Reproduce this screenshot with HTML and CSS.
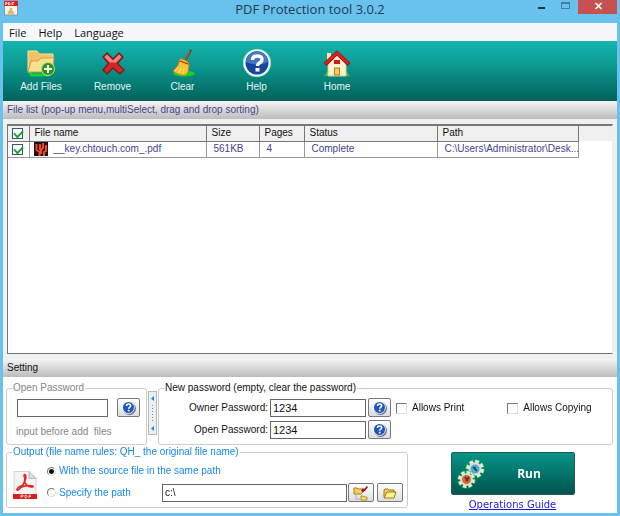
FILE: index.html
```html
<!DOCTYPE html>
<html lang="en">
<head>
<meta charset="utf-8">
<title>PDF Protection tool 3.0.2</title>
<link rel="stylesheet" href="styles.css">
</head>
<body>
<svg class="defs" aria-hidden="true">
  <symbol id="help" viewBox="0 0 28 28">
    <circle cx="14" cy="14" r="14" fill="#a5f5c0"/>
    <circle cx="14" cy="14" r="13" fill="#fff"/>
    <circle cx="14" cy="14" r="11.500" fill="#17479b"/>
    <path d="M3 13a11 11 0 0 1 22 0q-11 5-22 0z" fill="#4677be"/>
    <path d="M9.500 11q0-4 4.700-4t4.800 3.600q0 2-2.700 3.400-1.800 1-1.800 3" fill="none" stroke="#fff" stroke-width="3.400"/>
    <rect x="12.500" y="19" width="4" height="3.500" fill="#fff"/>
  </symbol>
  <symbol id="smallhelp" viewBox="0 0 14 14">
    <circle cx="7.500" cy="7.500" r="6.500" fill="#66748e"/>
    <circle cx="6.500" cy="6.500" r="6.300" fill="#f4f8ff"/>
    <circle cx="6.500" cy="6.500" r="5.500" fill="#1f55bd"/>
    <path d="M4.500 5q0-2 2.100-2t2.100 1.800q0 1-1.200 1.600-.8.500-.8 1.400" fill="none" stroke="#fff" stroke-width="1.600"/>
    <rect x="5.800" y="8.800" width="1.800" height="1.600" fill="#fff"/>
  </symbol>
  <symbol id="gear" viewBox="-9 -9 18 18">
    <circle r="6.700" fill="none" stroke="#22c838" stroke-width="4" stroke-dasharray="3.700 1.560"/>
    <circle r="6.400" fill="none" stroke="#e8eae5" stroke-width="3.200" stroke-dasharray="3.100 1.927"/>
    <circle r="6" fill="#dadfda"/>
  </symbol>
</svg>
<div class="window">
  <header class="titlebar">
    <svg class="appicon" viewBox="0 0 16 16" aria-hidden="true">
      <rect x="1.500" y="1" width="13" height="14" fill="#f8f3e4" stroke="#8b98a2" stroke-width="1"/>
      <rect x="1" y="1" width="14" height="5" fill="#e51f20"/>
      <path d="M2.500 5V2.500h1.500V4H2.500M5.500 2.500V5h1l.8-1.200-.8-1.300zM9 5V2.500h2M9 4h1.500" fill="none" stroke="#fff" stroke-width=".8"/>
      <path d="M5 14q-1-3 1-3l1-3h2l.5 3q2 0 1.500 3z" fill="#d9bd73"/>
    </svg>
    <h1>PDF Protection tool 3.0.2</h1>
    <div class="controls">
      <button type="button" aria-label="Minimize"><svg viewBox="0 0 24 14"><rect x="8" y="7" width="7" height="2" fill="#16344a"/></svg></button>
      <button type="button" aria-label="Maximize"><svg viewBox="0 0 24 14"><rect x="7.500" y="2.500" width="8" height="6" fill="none" stroke="#4b7c99"/><path d="M7 3h9" stroke="#4b7c99" stroke-width="2"/></svg></button>
      <button type="button" class="close" aria-label="Close"><svg viewBox="0 0 39 14"><path d="M17.500 3l6 6m0-6l-6 6" stroke="#fff" stroke-width="1.700"/></svg></button>
    </div>
  </header>
  <nav class="menu">
    <button type="button">File</button><button type="button">Help</button><button type="button">Language</button>
  </nav>
  <div class="toolbar">
    <button type="button">
      <svg viewBox="0 0 28 28" aria-hidden="true">
        <path d="M1 22l4 4h16l5-6" fill="none" stroke="#18d52e" stroke-width="3"/>
        <path d="M1 22V2h9l2 3h14v16z" fill="#efc264" stroke="#fbe29a"/>
        <path d="M1 23l3-11h7l3-3h13l-2 14z" fill="#fadf92" stroke="#d49a45"/>
        <circle cx="21" cy="20" r="6.500" fill="#2f951f" stroke="#b7e875"/>
        <path d="M21 16v8m-4-4h8" stroke="#fff" stroke-width="2"/>
      </svg>
      <span>Add Files</span>
    </button>
    <button type="button">
      <svg viewBox="0 0 28 28" aria-hidden="true">
        <path d="M4 8l4-4 6 6 6-6 4 4-5.500 6.500L25 21l-4 4-7-6-6 6-4-4 5.500-6.500z" fill="#d92525" stroke="#68231c" stroke-width="1.300"/>
        <path d="M5.500 8L8 5.500l6 6 6-6L22.500 8 17 13.500h-6z" fill="#ef8580"/>
      </svg>
      <span>Remove</span>
    </button>
    <button type="button">
      <svg viewBox="0 0 28 28" aria-hidden="true">
        <ellipse cx="15" cy="24.500" rx="11" ry="3" fill="#10d526"/>
        <path d="M15.500 13L22 1" stroke="#78301d" stroke-width="2"/>
        <path d="M16 12l5-10" stroke="#e05b29" stroke-width="1"/>
        <path d="M11 10q2-1 8 3l1 4q0 6-3 9-8 1-13-4 6-5 7-12z" fill="#f5c334" stroke="#b9851f"/>
        <path d="M11 12l8 3" stroke="#a52d1c" stroke-width="1.200"/>
        <path d="M9 18l-3 4m6-3l-2 5m5-4l-1 5" stroke="#ffe77a"/>
      </svg>
      <span>Clear</span>
    </button>
    <button type="button">
      <svg aria-hidden="true"><use href="#help"/></svg>
      <span>Help</span>
    </button>
    <button type="button">
      <svg viewBox="0 0 28 28" aria-hidden="true">
        <path d="M1 27l4-5h18l4 5z" fill="#57b92f"/>
        <path d="M4 4h4v9H4z" fill="#f4e7b5"/>
        <path d="M5 15l9-9 9 9v12H5z" fill="#fff4d0" stroke="#d9c58e"/>
        <path d="M2 15.500L14 4l12 11.500" fill="none" stroke="#7e1611" stroke-width="4"/>
        <path d="M2.500 15L14 4l11.500 11" fill="none" stroke="#e21c19" stroke-width="3"/>
        <rect x="11" y="11" width="6" height="4" fill="#c91b18"/>
        <rect x="11.500" y="19" width="5" height="7" fill="#f7cd5b" stroke="#ad7c2b"/>
      </svg>
      <span>Home</span>
    </button>
  </div>
  <h2 class="bar listbar">File list (pop-up menu,multiSelect, drag and drop sorting)</h2>
  <main class="filelist">
    <div class="listbox">
      <table>
        <colgroup><col class="c-check"><col class="c-name"><col class="c-size"><col class="c-pages"><col class="c-status"><col class="c-path"><col></colgroup>
        <thead>
          <tr><th><input class="tick" type="checkbox" checked aria-label="Select all files"></th><th>File name</th><th>Size</th><th>Pages</th><th>Status</th><th>Path</th><th class="rest"></th></tr>
        </thead>
        <tbody>
          <tr>
            <td><input class="tick" type="checkbox" checked aria-label="Select file"></td>
            <td><div class="file"><svg viewBox="0 0 14 14" aria-hidden="true"><rect width="14" height="14" fill="#21100d"/><path d="M2.500 2v6l3 2v4M6 2v6M9 1v5l-2 2v4M12 3v6l-2 1v4" fill="none" stroke="#f04a25" stroke-width="2"/></svg>__key.chtouch.com_.pdf</div></td>
            <td>561KB</td><td>4</td><td>Complete</td><td>C:\Users\Administrator\Desk...</td><td class="rest"></td>
          </tr>
        </tbody>
      </table>
    </div>
  </main>
  <h2 class="bar">Setting</h2>
  <form class="settings">
    <div class="passwords">
      <fieldset class="current">
        <legend>Open Password</legend>
        <div class="line">
          <input class="text" type="password" aria-label="Open Password">
          <button class="small" type="button" aria-label="Help"><svg><use href="#smallhelp"/></svg></button>
        </div>
        <p>input before add&nbsp; files</p>
      </fieldset>
      <div class="splitter"><svg viewBox="0 0 7 42" aria-hidden="true"><path d="M5 4L2 6.500 5 9zM5 34l-3 2.500L5 39z" fill="#1687ec"/><path d="M3.500 13v18" stroke="#3a9bea" stroke-dasharray="1 2"/></svg></div>
      <fieldset class="new">
        <legend>New password (empty, clear the password)</legend>
        <div class="fields">
          <label for="owner">Owner Password:</label>
          <input class="text" id="owner" type="text" value="1234">
          <button class="small" type="button" aria-label="Owner password help"><svg><use href="#smallhelp"/></svg></button>
          <label for="open">Open Password:</label>
          <input class="text" id="open" type="text" value="1234" autofocus>
          <button class="small" type="button" aria-label="Open password help"><svg><use href="#smallhelp"/></svg></button>
        </div>
        <label class="allow"><input type="checkbox">Allows Print</label>
        <label class="allow copying"><input type="checkbox">Allows Copying</label>
      </fieldset>
    </div>
    <div class="bottom">
      <fieldset class="output">
        <legend>Output (file name rules: QH_ the original file name)</legend>
        <svg class="pdf" viewBox="0 0 24 28" aria-hidden="true">
          <path d="M1 .5h15l7 7v20H1z" fill="#f4f4f4" stroke="#d5d5d5"/>
          <path d="M16 .5v7h7z" fill="#ddd" stroke="#bbb"/>
          <path d="M4 19q-1-2 6-5 3-5 1-9 0-2 1.500-1 1 2-1 7 2 4 6 5 4 0 2-1-4-1-11 1-4 4-4.500 3z" fill="none" stroke="#df2925" stroke-width="1.600"/>
          <rect x="0" y="23" width="24" height="5" fill="#d81f1f"/>
          <path d="M8 27v-3h2v1.500H8m4-1.500v3h1l1-1.500-1-1.500zm4 3v-3h2m-2 1.500h2" fill="none" stroke="#fff" stroke-width=".7"/>
        </svg>
        <div class="choices">
          <label><input type="radio" name="out" checked>With the source file in the same path</label>
          <div class="line">
            <label class="specify"><input type="radio" name="out">Specify the path</label>
            <input class="text path" type="text" value="c:\" aria-label="Output path">
            <button class="small wide" type="button" aria-label="Choose folder"><svg class="folder" viewBox="0 0 18 16"><path d="M2 9V3h3l1 1h5v3L9 9z" fill="#f5d35b" stroke="#a98019"/><path d="M9 15v-4h2l1 1h3v3z" fill="#f7df76" stroke="#b28e27"/><path d="M4 10v4h4" fill="none" stroke="#a7adb5"/><path d="M9 6l2-3 1 1 3-3 1 1-3 4-2 1z" fill="#971c18"/></svg></button>
            <button class="small wide last" type="button" aria-label="Open folder"><svg class="folder" viewBox="0 0 18 16"><path d="M3 12V5l1-1h3l1 1h5v2" fill="#eed05c" stroke="#9b7c1e"/><path d="M3 13l3-6h9l-2 6z" fill="#fff08b" stroke="#9b7c1e"/></svg></button>
          </div>
        </div>
      </fieldset>
      <div class="action">
        <button class="run" type="button">
          <svg viewBox="0 0 28 30" aria-hidden="true">
            <use href="#gear" x="8" y="0" width="20" height="20"/><circle cx="18" cy="10" r="4.500" fill="#4ba9d3"/><path d="M16 8l4 4m-2-4v3" stroke="#17465e" stroke-width="1.600"/>
            <use href="#gear" x="0" y="11" width="19" height="19"/><circle cx="9.500" cy="20.500" r="4.500" fill="#dc6533"/><path d="M8 18l3 4m1-4l-3 4" stroke="#56301e" stroke-width="1.500"/>
          </svg>
          <span>Run</span>
        </button>
        <a href="#guide">Operations Guide</a>
      </div>
    </div>
  </form>
</div>
</body>
</html>
```
FILE: styles.css
```css
* { box-sizing: border-box; }

body {
  margin: 0;
  font: 10px/12px "Liberation Sans", Arial, sans-serif;
  color: #111;
}

button, input { font: inherit; color: inherit; margin: 0; padding: 0; }
button { border: 0; background: none; }
svg { display: block; }
.defs { position: absolute; width: 0; height: 0; }

.window {
  display: flex;
  flex-direction: column;
  min-height: 100vh;
  padding: 0 3px 3px;
  background: #69c1ee;
}

.titlebar {
  display: grid;
  grid-template-columns: 1fr auto 1fr;
  height: 23px;
}
.appicon { width: 16px; height: 16px; }
h1 {
  margin: 0;
  font: 13px/19px "Open Sans", "Noto Sans", sans-serif;
  color: #1d3d50;
}
.controls { display: flex; justify-content: flex-end; align-items: flex-start; }
.controls svg { width: 24px; height: 14px; }
.controls .close { background: #c75050; }
.controls .close svg { width: 39px; }

.menu {
  display: flex;
  gap: 12px;
  height: 18px;
  padding: 0 6px;
  background: #f5f7fb;
  font: 11px/17px "Open Sans", "Noto Sans", sans-serif;
}

.toolbar {
  display: grid;
  grid-template-columns: 76px 67px 73px 75px 86px;
  height: 60px;
  padding-top: 8px;
  background: linear-gradient(#14b5ae, #0d9b94 38%, #006159);
  color: #e4f5f3;
}
.toolbar button { display: flex; flex-direction: column; align-items: center; gap: 4px; }
.toolbar svg { width: 28px; height: 28px; }

.bar {
  height: 18px;
  margin: 0;
  padding: 0 4px;
  background: linear-gradient(#f5f5f5, #bcbcbe);
  font: 10px/17px "Liberation Sans", Arial, sans-serif;
}
.listbar { color: #44448a; }

.filelist {
  display: flex;
  flex: 1;
  padding: 5px 4px;
  background: #f0f0f0;
}
.listbox {
  flex: 1;
  border: 1px solid #777;
  border-right-color: #eee;
  border-top-width: 2px;
  background: #fff;
}
table { width: 100%; table-layout: fixed; border-collapse: collapse; }
.c-check { width: 21px; }
.c-name { width: 177px; }
.c-size { width: 53px; }
.c-pages { width: 45px; }
.c-status { width: 133px; }
.c-path { width: 141px; }
th, td {
  height: 16px;
  padding: 0 5px;
  border: 1px solid #999;
  border-width: 0 1px 1px 0;
  font-weight: normal;
  text-align: left;
  white-space: nowrap;
}
th { height: 15px; background: #f0f0f0; border-color: #777; }
td { color: #44448a; padding: 0 0 0 7px; }
th:first-child, td:first-child { padding: 0 4px; }
td:nth-child(2) { padding-left: 4px; }
th.rest, td.rest { border: 0; }
.file { display: flex; align-items: center; gap: 6px; }
.file svg { width: 14px; height: 14px; }

input[type="checkbox"] {
  appearance: none;
  width: 11px;
  height: 11px;
  border: 1px solid #777;
  border-right-color: #ddd;
  border-bottom-color: #ddd;
  background: #fff;
}
input.tick { display: block; border-color: #36576b; }
.tick::before {
  content: "";
  display: block;
  width: 7px;
  height: 4px;
  margin: 1px;
  border: 2px solid #19a334;
  border-width: 0 0 2px 2px;
  transform: rotate(-45deg);
}

.settings { padding: 5px 4px 2px 3px; background: #fff; }
fieldset {
  min-width: 0;
  margin: 0;
  padding: 0;
  border: 1px solid #ccc;
  border-radius: 3px;
}
legend { margin-left: 5px; padding: 0 1px; white-space: nowrap; }
.passwords { display: flex; gap: 1px; }
.current { width: 141px; height: 63px; color: #858585; }
.current .line { padding: 4px 6px 0 10px; justify-content: space-between; }
.current .text { width: 91px; }
.current p { margin: 9px 0 0; padding-left: 9px; }
.line { display: flex; align-items: center; }
.text {
  height: 18px;
  padding: 0 2px;
  border: 1px solid #666;
  border-radius: 0;
  background: #fff;
  color: #111;
  outline: 0;
}
.small {
  display: grid;
  place-items: center;
  width: 23px;
  height: 19px;
  border: 1px solid #777;
  border-radius: 2px;
  background: linear-gradient(#fff, #ddd);
}
.small svg { width: 14px; height: 14px; }
.splitter { width: 9px; height: 44px; margin-top: 9px; border: 1px solid #bbb; background: #eee; }
.splitter svg { width: 7px; height: 42px; }

.new { display: flex; flex: 1; align-items: flex-start; height: 63px; }
.fields {
  display: grid;
  grid-template-columns: 109px 96px 23px;
  column-gap: 2px;
  row-gap: 3px;
  align-items: center;
  padding-top: 4px;
}
.fields label { text-align: right; }
.fields .text { font-size: 11px; }
.allow { display: flex; align-items: center; gap: 5px; padding: 8px 0 0 5px; white-space: nowrap; }
.copying { padding-left: 43px; }

.bottom { display: flex; margin-top: 1px; }
.output { display: flex; width: 402px; height: 62px; color: #1687ec; }
.pdf { width: 24px; height: 28px; margin: 13px 10px 0 6px; }
.choices { flex: 1; padding: 7px 4px 0 0; }
.choices label { display: flex; align-items: center; gap: 3px; white-space: nowrap; }
.choices .line { margin-top: 6px; }
.choices .specify { width: 115px; }
input[type="radio"] {
  appearance: none;
  width: 9px;
  height: 9px;
  border: 1px solid #777;
  border-right-color: #ddd;
  border-bottom-color: #ddd;
  border-radius: 50%;
  background: #fff;
}
input[type="radio"]:checked { background: radial-gradient(#111 2px, #fff 3px); }
.choices .path { flex: 1; min-width: 0; }
.wide { width: 26px; margin-left: 1px; }
.last { margin-left: 3px; }
.small .folder { width: 18px; height: 16px; }

.action { display: flex; flex: 1; flex-direction: column; align-items: center; padding: 6px 0 0 4px; }
.run {
  display: grid;
  grid-template-columns: 28px 1fr;
  align-items: center;
  width: 124px;
  height: 43px;
  padding: 0 0 0 5px;
  border: 1px solid #245c55;
  border-radius: 2px;
  background: linear-gradient(#079389, #00554e);
  color: #fff;
  font: bold 12px/14px "Open Sans", sans-serif;
}
.run svg { width: 28px; height: 30px; }
.action a { margin-top: 3px; color: #1b1bdc; font: 10px/13px "DejaVu Sans", Verdana, sans-serif; }
```
